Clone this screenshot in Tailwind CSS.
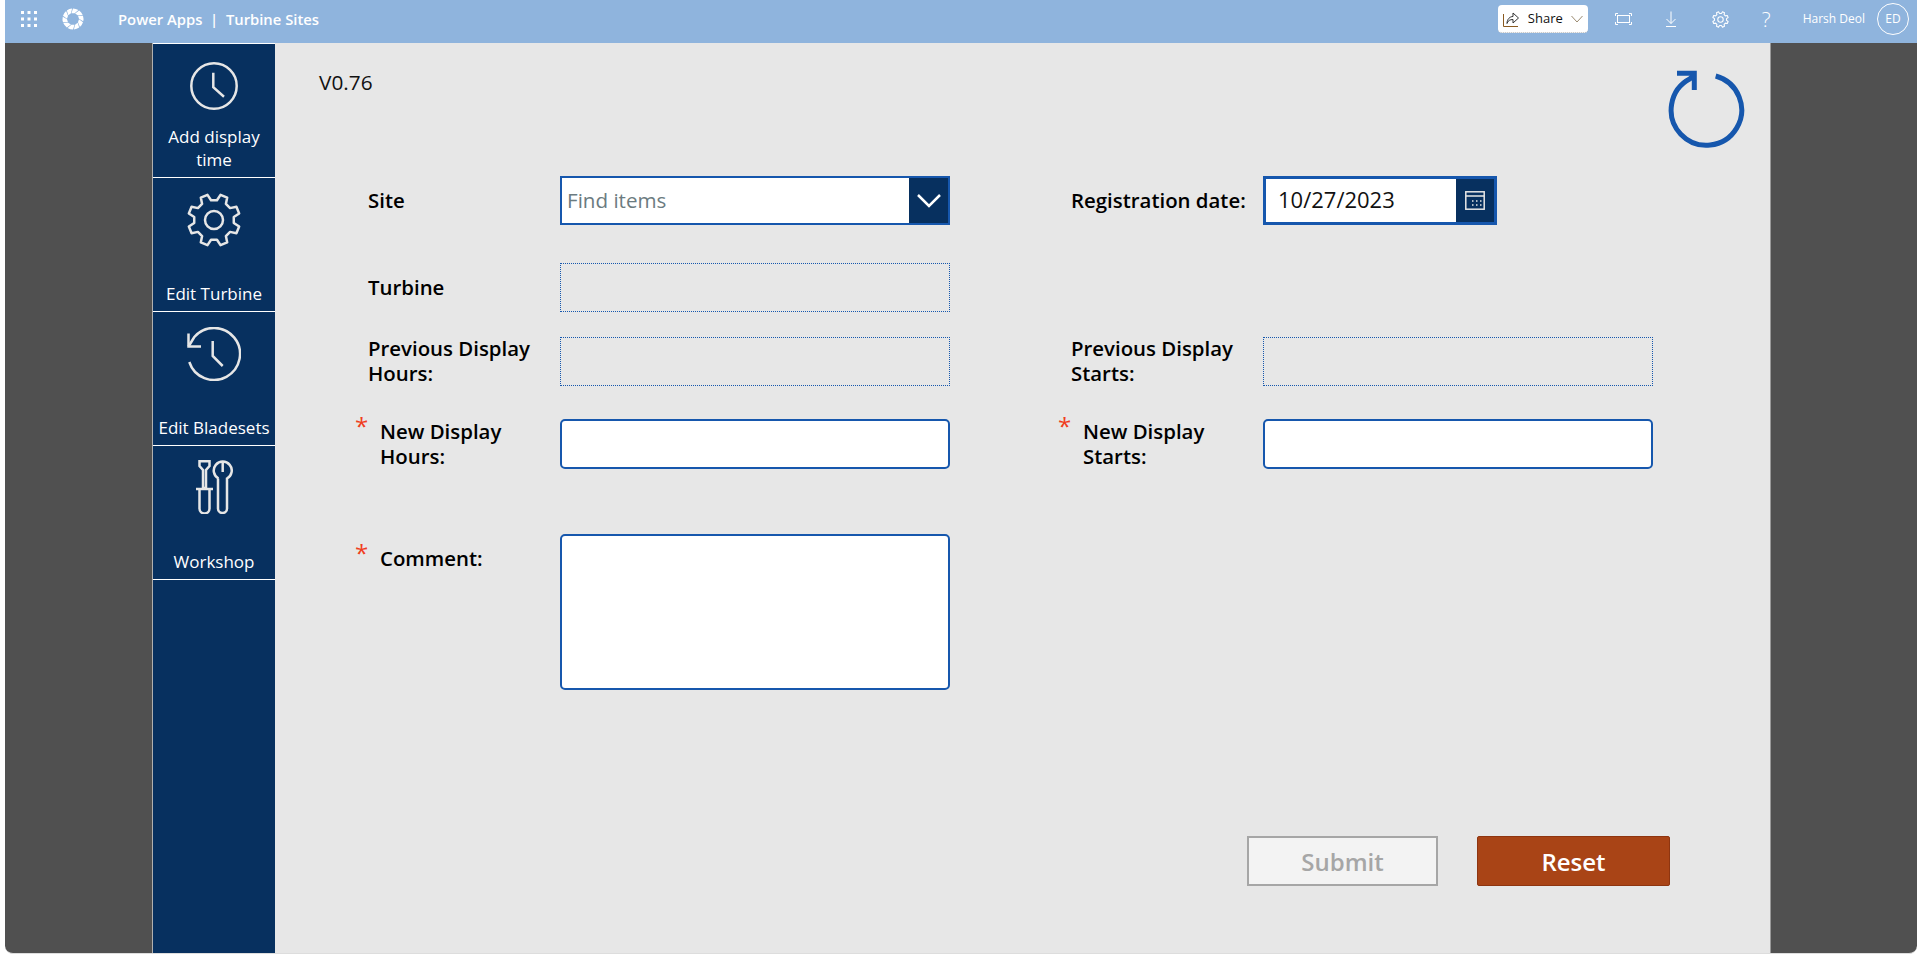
<!DOCTYPE html>
<html>
<head>
<meta charset="utf-8">
<script src="https://cdn.jsdelivr.net/npm/@tailwindcss/browser@4"></script>
</head>
<body class="m-0 h-[954px] w-[1921px] overflow-hidden bg-white font-['Open_Sans','Noto_Sans',sans-serif]">
<header class="ml-[5px] flex h-[43px] w-[1912px] items-center bg-[#8fb4dd] pb-[5px] text-white">
  <svg class="ml-[16px] h-4 w-4" viewBox="0 0 16 16" fill="#fff"><rect x="0" y="0" width="3" height="3"/><rect x="6.500" y="0" width="3" height="3"/><rect x="13" y="0" width="3" height="3"/><rect x="0" y="6.500" width="3" height="3"/><rect x="6.500" y="6.500" width="3" height="3"/><rect x="13" y="6.500" width="3" height="3"/><rect x="0" y="13" width="3" height="3"/><rect x="6.500" y="13" width="3" height="3"/><rect x="13" y="13" width="3" height="3"/></svg>
  <svg class="ml-[25px] h-[22px] w-[22px]" viewBox="0 0 22 22" fill="#fff">
    <path d="M11 .5A10.500 10.500 0 0 1 16.410 2L12.650 5.230L9.450 5.200Z"/>
    <path d="M11 .5A10.500 10.500 0 0 1 16.410 2L12.650 5.230L9.450 5.200Z" transform="rotate(36 11 11)"/>
    <path d="M11 .5A10.500 10.500 0 0 1 16.410 2L12.650 5.230L9.450 5.200Z" transform="rotate(72 11 11)"/>
    <path d="M11 .5A10.500 10.500 0 0 1 16.410 2L12.650 5.230L9.450 5.200Z" transform="rotate(108 11 11)"/>
    <path d="M11 .5A10.500 10.500 0 0 1 16.410 2L12.650 5.230L9.450 5.200Z" transform="rotate(144 11 11)"/>
    <path d="M11 .5A10.500 10.500 0 0 1 16.410 2L12.650 5.230L9.450 5.200Z" transform="rotate(180 11 11)"/>
    <path d="M11 .5A10.500 10.500 0 0 1 16.410 2L12.650 5.230L9.450 5.200Z" transform="rotate(216 11 11)"/>
    <path d="M11 .5A10.500 10.500 0 0 1 16.410 2L12.650 5.230L9.450 5.200Z" transform="rotate(252 11 11)"/>
    <path d="M11 .5A10.500 10.500 0 0 1 16.410 2L12.650 5.230L9.450 5.200Z" transform="rotate(288 11 11)"/>
    <path d="M11 .5A10.500 10.500 0 0 1 16.410 2L12.650 5.230L9.450 5.200Z" transform="rotate(324 11 11)"/>
  </svg>
  <span class="ml-[34px] text-[14.800px] font-semibold whitespace-pre">Power Apps  |  Turbine Sites</span>
  <div class="mr-[8px] ml-auto flex items-center">
    <div class="flex h-[28px] w-[90px] items-center rounded-[4px] border-b border-dotted border-[#bbb] bg-white pl-[5px] text-[#111]">
      <svg class="h-4 w-4" viewBox="0 0 16 16" fill="none" stroke="#333" stroke-width="1"><path d="M.5 3v12.500h14.500" stroke="#8a5a20"/><path d="M4 12.500c0-4.500 3-7 6-7V2l5.500 5-5.500 5V8.500c-3 0-5 1-6 4z"/></svg>
      <span class="ml-[9px] text-[13px] font-medium">Share</span>
      <svg class="ml-[8px] h-3 w-3" viewBox="0 0 12 12" fill="none" stroke="#9a8a70"><path d="M.5 3l5.500 6 5.500-6"/></svg>
    </div>
    <svg class="ml-[27px] h-[12px] w-[17px]" viewBox="0 0 17 12" fill="none" stroke="#fff"><rect x="2.500" y="2.500" width="12" height="7"/><path d="M.5 3V.5H3M14 .5h2.500V3M16.500 9v2.500H14M3 11.500H.5V9"/></svg>
    <svg class="ml-[31px] h-4 w-4" viewBox="0 0 16 16" fill="none" stroke="#fff"><path d="M8 .5v12M3.500 8L8 12.500 12.500 8M3 15.500h10"/></svg>
    <svg class="ml-[33px] h-[17px] w-[17px]" viewBox="0 0 56 56" fill="none" stroke="#fff" stroke-width="3.500" stroke-linejoin="round"><circle cx="28" cy="28" r="9"/><path transform="translate(28 28)" d="M19.780 -2.960L25.170 -6.510L22.400 -13.200L16.080 -11.900L11.900 -16.080L13.200 -22.400L6.510 -25.170L2.960 -19.780L-2.960 -19.780L-6.510 -25.170L-13.200 -22.400L-11.900 -16.080L-16.080 -11.900L-22.400 -13.200L-25.170 -6.510L-19.780 -2.960L-19.780 2.960L-25.170 6.510L-22.400 13.200L-16.080 11.900L-11.900 16.080L-13.200 22.400L-6.510 25.170L-2.960 19.780L2.960 19.780L6.510 25.170L13.200 22.400L11.900 16.080L16.080 11.900L22.400 13.200L25.170 6.510L19.780 2.960Z"/></svg>
    <span class="ml-[33px] text-[21px] leading-none font-light">?</span>
    <span class="ml-[32px] text-[12px]">Harsh Deol</span>
    <span class="ml-[12px] flex h-[32px] w-[32px] items-center justify-center rounded-full border border-white text-[12px]">ED</span>
  </div>
</header>
<main class="ml-[5px] h-[911px] w-[1912px] overflow-hidden rounded-b-[8px] border-b border-[#ddd] bg-[#505050] pl-[147px]">
  <div class="flex h-full w-[1619px] border-x border-l-[#b0b0b0] border-r-[#999] bg-[#e7e7e7]">
    <nav class="flex w-[122px] shrink-0 flex-col bg-[#07305f] text-[17px] leading-[23px] text-white">
      <a class="flex h-[135px] flex-col items-center border-y border-y-white pt-[18px] text-center">
        <svg class="h-12 w-12 shrink-0" viewBox="0 0 48 48" fill="none" stroke="#e6e6e6" stroke-width="2.500"><circle cx="24" cy="24" r="22.700"/><path d="M23.300 10.700v14.600L34 34.700"/></svg>
        <span class="mt-[15px] w-[100px]">Add display time</span>
      </a>
      <a class="flex h-[134px] flex-col items-center border-b border-white pt-[14px] text-center">
        <svg class="h-[56px] w-[56px] shrink-0" viewBox="0 0 56 56" fill="none" stroke="#e6e6e6" stroke-width="2.500" stroke-linejoin="round"><circle cx="28" cy="28" r="9"/><path transform="translate(28 28)" d="M19.780 -2.960L25.170 -6.510L22.400 -13.200L16.080 -11.900L11.900 -16.080L13.200 -22.400L6.510 -25.170L2.960 -19.780L-2.960 -19.780L-6.510 -25.170L-13.200 -22.400L-11.900 -16.080L-16.080 -11.900L-22.400 -13.200L-25.170 -6.510L-19.780 -2.960L-19.780 2.960L-25.170 6.510L-22.400 13.200L-16.080 11.900L-11.900 16.080L-13.200 22.400L-6.510 25.170L-2.960 19.780L2.960 19.780L6.510 25.170L13.200 22.400L11.900 16.080L16.080 11.900L22.400 13.200L25.170 6.510L19.780 2.960Z"/></svg>
        <span class="mt-[34px]">Edit Turbine</span>
      </a>
      <a class="flex h-[134px] flex-col items-center border-b border-white pt-[15px] text-center">
        <svg class="h-[54px] w-[54px] shrink-0" viewBox="0 0 54 54" fill="none" stroke="#e6e6e6" stroke-width="2.500"><path d="M2.300 35A26 26 0 1 0 7.300 10L1.500 19.500"/><path d="M1.500 6.500V19.500H14"/><path d="M25.700 14V29L35.700 39"/></svg>
        <span class="mt-[35px]">Edit Bladesets</span>
      </a>
      <a class="flex h-[134px] flex-col items-center border-b border-white pt-[14px] text-center">
        <svg class="h-[54px] w-[37px] shrink-0" viewBox="0 0 37 54" fill="none" stroke="#e6e6e6" stroke-width="2.500"><path d="M3.500 1.200H13.500V6L10 10V28H7V10L3.500 6Z"/><path d="M0 29H17M3.500 29V48.500a5 5 0 0 0 10 0V29"/><path d="M22.500 18.500A9 9 0 1 1 31 18.500V48.500a4.500 4.500 0 0 1-9 0V18.500"/><path d="M26.700 1.500V12"/></svg>
        <span class="mt-[36px]">Workshop</span>
      </a>
    </nav>
    <section class="relative flex-1 pt-[133px] pr-[100px] pl-[93px] text-black">
      <p class="absolute top-[25px] left-[44px] text-[20.800px] leading-[28px] text-[#111]">V0.76</p>
      <svg class="absolute top-[27px] right-[23px] h-[80px] w-[80px]" viewBox="0 0 80 80" fill="none" stroke="#1657ad" stroke-width="5"><path d="M48.700 6A35.250 35.250 0 1 1 23 8.800L27 4"/><path d="M10 3.300H27.300V20"/></svg>

      <div class="grid h-[49px] grid-cols-[703px_auto]">
        <div class="flex items-center">
          <label class="w-[192px] text-[20.400px] leading-[25px] font-semibold">Site</label>
          <div class="flex h-[49px] w-[390px] border-2 border-[#1657ad] bg-white">
            <span class="flex-1 pl-[5px] text-[20.600px] leading-[44px] text-[#6b7b80]">Find items</span>
            <span class="flex w-[39px] items-center justify-center bg-[#07305f]"><svg class="h-[14px] w-[24px]" viewBox="0 0 24 14" fill="none" stroke="#fff" stroke-width="2.500"><path d="M1 1l11 11L23 1"/></svg></span>
          </div>
        </div>
        <div class="flex items-center">
          <label class="w-[192px] text-[20.400px] leading-[25px] font-semibold">Registration date:</label>
          <div class="flex h-[49px] w-[234px] border-[3px] border-[#1657ad] bg-white">
            <span class="flex-1 pl-[12px] text-[22px] leading-[40px] text-[#111]">10/27/2023</span>
            <span class="flex w-[38px] items-center justify-center bg-[#07305f]"><svg class="h-[19px] w-[20px]" viewBox="0 0 20 19" fill="none" stroke="#e6e6e6" stroke-width="1.500"><rect x=".8" y=".8" width="18.400" height="17.400"/><path d="M.8 5h18.400M7 10h1.500M11 10h1.500M15 10h1.500M7 14h1.500M11 14h1.500M15 14h1.500" /></svg></span>
          </div>
        </div>
      </div>

      <div class="mt-[38px] flex h-[49px] items-center">
        <label class="w-[192px] text-[20.400px] leading-[25px] font-semibold">Turbine</label>
        <div class="h-[49px] w-[390px] border border-dotted border-[#1657ad]"></div>
      </div>

      <div class="mt-[24px] grid h-[49px] grid-cols-[703px_auto]">
        <div class="flex items-center">
          <label class="w-[192px] text-[20.400px] leading-[25px] font-semibold">Previous Display<br>Hours:</label>
          <div class="h-[49px] w-[390px] border border-dotted border-[#1657ad]"></div>
        </div>
        <div class="flex items-center">
          <label class="w-[192px] text-[20.400px] leading-[25px] font-semibold">Previous Display<br>Starts:</label>
          <div class="h-[49px] w-[390px] border border-dotted border-[#1657ad]"></div>
        </div>
      </div>

      <div class="mt-[33px] grid h-[50px] grid-cols-[703px_auto]">
        <div class="flex items-center">
          <label class="relative w-[192px] pt-[1px] pl-[12px] text-[20.400px] leading-[25px] font-semibold"><span class="absolute top-[-7px] left-[-13px] text-[24px] leading-[30px] font-normal text-[#f03e1e]">*</span>New Display<br>Hours:</label>
          <div class="h-[50px] w-[390px] rounded-[5px] border-2 border-[#1657ad] bg-white"></div>
        </div>
        <div class="flex items-center">
          <label class="relative w-[192px] pt-[1px] pl-[12px] text-[20.400px] leading-[25px] font-semibold"><span class="absolute top-[-7px] left-[-13px] text-[24px] leading-[30px] font-normal text-[#f03e1e]">*</span>New Display<br>Starts:</label>
          <div class="h-[50px] w-[390px] rounded-[5px] border-2 border-[#1657ad] bg-white"></div>
        </div>
      </div>

      <div class="mt-[66px] flex items-start">
        <label class="relative mt-[12px] w-[192px] pl-[12px] text-[20.400px] leading-[25px] font-semibold"><span class="absolute top-[-8px] left-[-13px] text-[24px] leading-[30px] font-normal text-[#f03e1e]">*</span>Comment:</label>
        <div class="h-[156px] w-[390px] rounded-[5px] border-2 border-[#1657ad] bg-white"></div>
      </div>

      <div class="mt-[146px] flex justify-end gap-[39px]">
        <button class="h-[50px] w-[191px] border-2 border-[#a6a6a6] bg-[#f3f3f3] text-[24px] leading-[45px] font-semibold text-[#a6a6a6]">Submit</button>
        <button class="h-[50px] w-[193px] rounded-[2px] border border-[#8e3510] bg-[#a94416] text-[24px] leading-[47px] font-semibold text-white">Reset</button>
      </div>
    </section>
  </div>
</main>
</body>
</html>
